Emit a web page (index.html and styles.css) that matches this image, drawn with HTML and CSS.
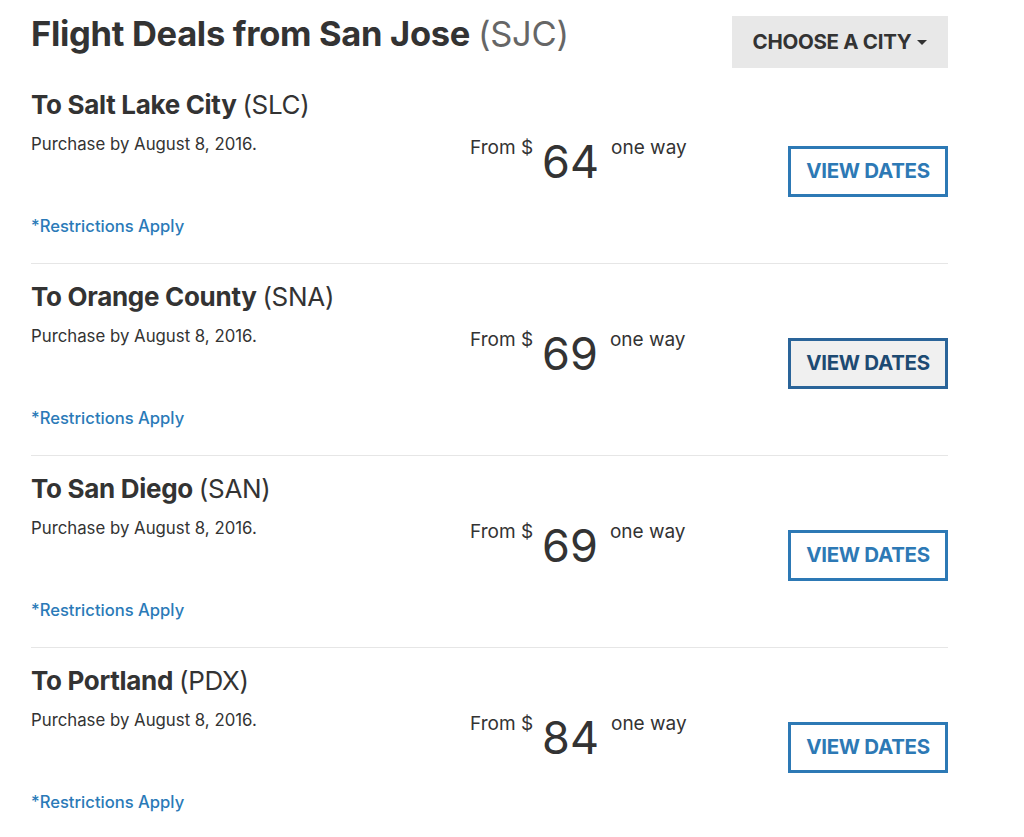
FILE: index.html
```html
<!DOCTYPE html>
<html>
<head>
<meta charset="utf-8">
<link rel="stylesheet" href="styles.css">
</head>
<body>
<div class="page">
  <div class="top">
    <h1 class="title">Flight Deals from San Jose <span class="code">(SJC)</span></h1>
    <button class="choose">CHOOSE A CITY <span class="caret"></span></button>
  </div>

  <div class="deal">
    <h2 class="dest">To Salt Lake City <span class="code">(SLC)</span></h2>
    <div class="body">
      <div class="left">
        <p class="purchase">Purchase by August 8, 2016.</p>
        <a class="restrict">*Restrictions Apply</a>
      </div>
      <div class="price"><span class="from">From $</span><span class="amount">64</span><span class="way">one way</span></div>
      <button class="view">VIEW DATES</button>
    </div>
  </div>

  <div class="deal">
    <h2 class="dest">To Orange County <span class="code">(SNA)</span></h2>
    <div class="body">
      <div class="left">
        <p class="purchase">Purchase by August 8, 2016.</p>
        <a class="restrict">*Restrictions Apply</a>
      </div>
      <div class="price"><span class="from">From $</span><span class="amount">69</span><span class="way">one way</span></div>
      <button class="view hover">VIEW DATES</button>
    </div>
  </div>

  <div class="deal">
    <h2 class="dest">To San Diego <span class="code">(SAN)</span></h2>
    <div class="body">
      <div class="left">
        <p class="purchase">Purchase by August 8, 2016.</p>
        <a class="restrict">*Restrictions Apply</a>
      </div>
      <div class="price"><span class="from">From $</span><span class="amount">69</span><span class="way">one way</span></div>
      <button class="view">VIEW DATES</button>
    </div>
  </div>

  <div class="deal last">
    <h2 class="dest">To Portland <span class="code">(PDX)</span></h2>
    <div class="body">
      <div class="left">
        <p class="purchase">Purchase by August 8, 2016.</p>
        <a class="restrict">*Restrictions Apply</a>
      </div>
      <div class="price"><span class="from">From $</span><span class="amount">84</span><span class="way">one way</span></div>
      <button class="view">VIEW DATES</button>
    </div>
  </div>
</div>
</body>
</html>
```

FILE: styles.css
```css
* { box-sizing: border-box; }
html, body { margin: 0; padding: 0; background: #fff; }
body {
  font-family: Inter, "Liberation Sans", sans-serif;
  color: #333;
}
.page {
  width: 917px;
  margin-left: 31px;
}
.top {
  display: flex;
  justify-content: space-between;
  align-items: flex-start;
  height: 72px;
  padding-top: 16px;
}
.title {
  margin: -1px 0 0;
  font-size: 34.5px;
  line-height: 38px;
  font-weight: 700;
  letter-spacing: -0.3px;
  color: #333;
}
.title .code { font-weight: 400; color: #666; }
.choose {
  width: 216px;
  height: 52px;
  border: none;
  background: #e8e8e8;
  font-family: inherit;
  font-size: 20.5px;
  font-weight: 700;
  color: #333;
  letter-spacing: -0.3px;
  display: flex;
  align-items: center;
  justify-content: center;
  gap: 6px;
  padding: 0 0 2px;
}
.caret {
  width: 0; height: 0;
  border-left: 5px solid transparent;
  border-right: 5px solid transparent;
  border-top: 5px solid #333;
  margin-top: 3px;
}
.deal {
  height: 192px;
  padding-top: 17px;
  border-bottom: 1px solid #e6e6e6;
}
.deal.last { border-bottom: none; }
.dest {
  margin: 0;
  font-size: 26px;
  line-height: 31px;
  font-weight: 700;
  letter-spacing: -0.3px;
  color: #333;
}
.dest .code { font-weight: 400; }
.body {
  display: flex;
}
.left {
  width: 439px;
  display: flex;
  flex-direction: column;
}
.purchase {
  margin: 13px 0 0;
  font-size: 16.8px;
  line-height: 22px;
  color: #333;
}
.restrict {
  margin-top: 60px;
  font-size: 16.6px;
  line-height: 22px;
  color: #2a7ab8;
  font-weight: 500;
}
.price {
  width: 318px;
  display: flex;
  align-items: flex-start;
  padding-top: 16px;
}
.from {
  font-size: 19px;
  line-height: 24px;
  color: #333;
}
.amount {
  font-size: 45px;
  line-height: 50px;
  margin: 1px 12px 0 9px;
  color: #333;
}
.way {
  font-size: 19px;
  line-height: 24px;
}
.view {
  margin-top: 26px;
  width: 160px;
  height: 51px;
  background: #fff;
  border: 3px solid #2d79b5;
  color: #2d79b5;
  font-family: inherit;
  font-size: 20.5px;
  font-weight: 700;
  letter-spacing: -0.3px;
  padding: 0 0 2px;
}
.view.hover {
  background: #f0f0f0;
  border-color: #2a6499;
  color: #1d4a72;
}
```
